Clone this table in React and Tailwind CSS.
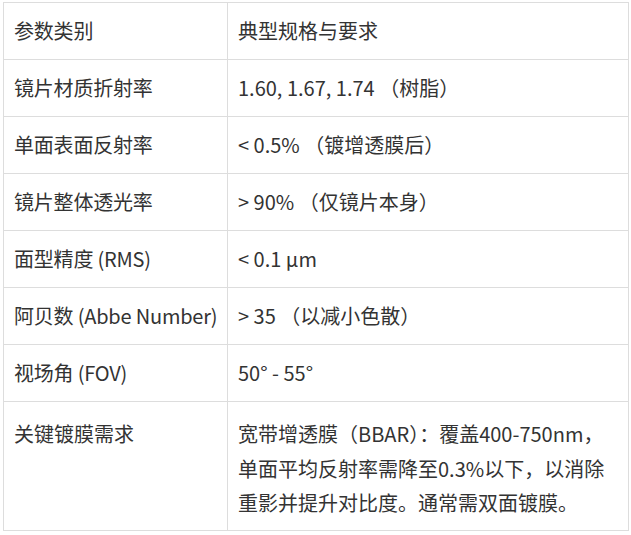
import React from "react";

const rows = [
  ["参数类别", "典型规格与要求"],
  ["镜片材质折射率", "1.60, 1.67, 1.74 （树脂）"],
  ["单面表面反射率", "< 0.5% （镀增透膜后）"],
  ["镜片整体透光率", "> 90% （仅镜片本身）"],
  ["面型精度 (RMS)", "< 0.1 μm"],
  ["阿贝数 (Abbe Number)", "> 35 （以减小色散）"],
  ["视场角 (FOV)", "50° - 55°"],
];

const cell = "border border-[#dddddd] px-[10px] align-top whitespace-nowrap";

const App = () => {
  return (
    <div className="bg-white w-[631px] h-[535px] pt-[2px] pl-[3px]">
      <table
        className="table-fixed border-collapse w-[626px] text-[20px] text-[#333333]"
        style={{ fontFamily: '"Noto Sans CJK SC", "Noto Sans", sans-serif' }}
      >
        <colgroup>
          <col className="w-[224px]" />
          <col />
        </colgroup>
        <tbody>
          {rows.map((row, index) => (
            <tr key={index} className="leading-[34px]">
              <td className={cell + " py-[11px] tracking-[-0.2px]"}>{row[0]}</td>
              <td className={cell + " py-[11px]"}>{row[1]}</td>
            </tr>
          ))}
          <tr className="leading-[34.5px]">
            <td className={cell + " pt-[15px] pb-[9px]"}>关键镀膜需求</td>
            <td className={cell + " pt-[15px] pb-[9px]"}>
              宽带增透膜（BBAR）：覆盖400-750nm，
              <br />
              单面平均反射率需降至0.3%以下，以消除
              <br />
              重影并提升对比度。通常需双面镀膜。
            </td>
          </tr>
        </tbody>
      </table>
    </div>
  );
};

export default App;
